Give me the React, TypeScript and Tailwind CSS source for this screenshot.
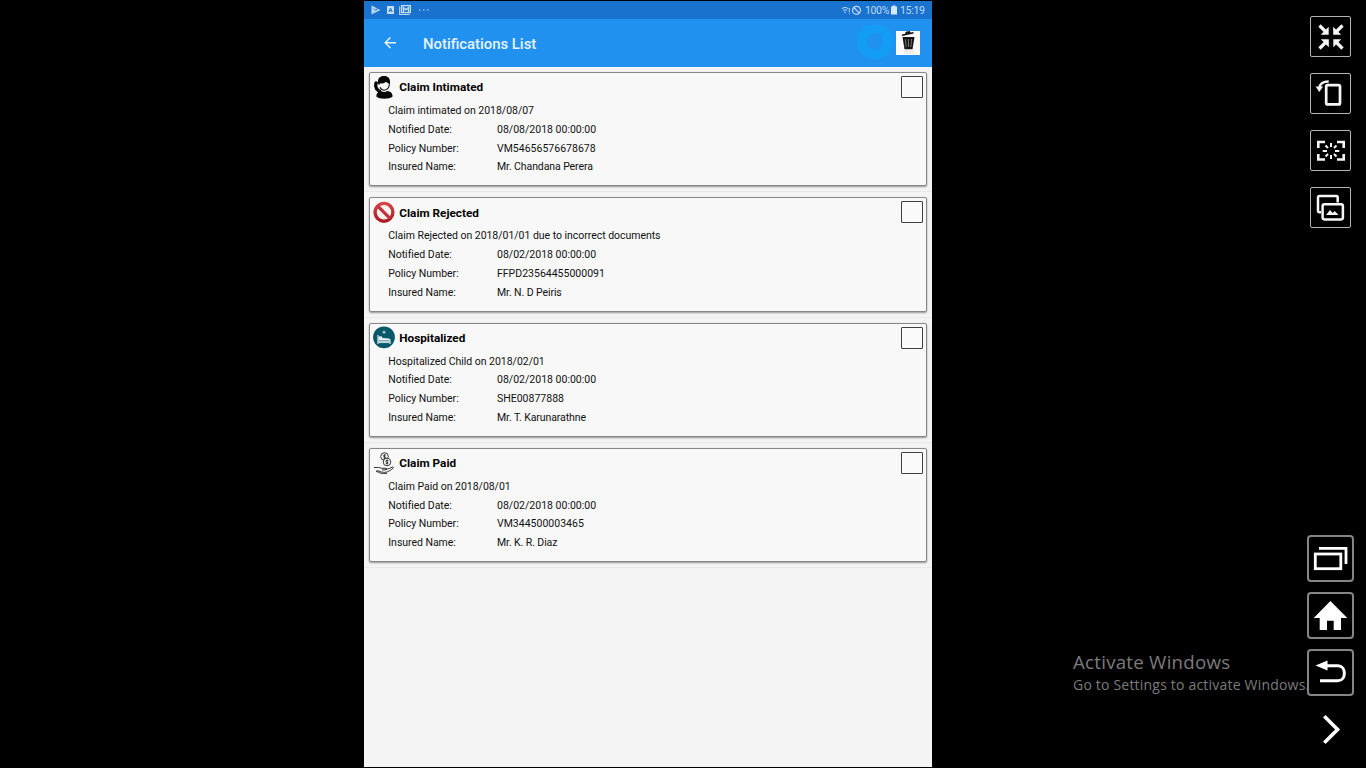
import React from "react";

type Notice = {
  title: string;
  message: string;
  date: string;
  policy: string;
  insured: string;
  icon: React.ReactNode;
};

const AgentIcon = () => (
  <svg className="h-[23px] w-[22px]" viewBox="0 0 22 23">
    <path d="M5.300 8.500C3.800 2.500 7 0 11 0S18 2.500 16.800 8.500z" fill="#050505" />
    <path d="M6.800 7.200Q11 8 13 5.800Q13.800 7.200 15.800 7.400C15.800 11.500 13.800 13.800 11.200 13.800S6.800 11.500 6.800 7.200Z" fill="#f8f8f8" />
    <path d="M2.500 5.300q2-.6 2.500 1.500l-.6 2.200q-.4 2 1.600 4l2 1.300q.6 1.200-.8 2-2.500.7-5-2.500Q.200 10 1.400 6.600z" fill="#050505" />
    <path d="M3.300 20.400c0-3 2-4.800 4.700-5.300q3.200 1.700 6.300 0c3 .5 5.300 2 5.300 5.300-3 3-13.300 3-16.300 0Z" fill="#050505" />
    <path d="M16.300 8.500q-.3 5-5 5.800-3 0-4.300-3" fill="none" stroke="#111" strokeWidth="1.100" />
  </svg>
);

const RejectedIcon = () => (
  <svg className="h-[23px] w-[22px]" viewBox="0 0 22 23">
    <defs>
      <linearGradient id="red" x1="0" y1="0" x2="0" y2="1">
        <stop offset="0" stopColor="#d4474b" />
        <stop offset="1" stopColor="#ad1b22" />
      </linearGradient>
    </defs>
    <circle cx="11" cy="11.300" r="8.900" fill="#f8f4f4" stroke="url(#red)" strokeWidth="3.400" />
    <path d="M5 5.300l12 12" stroke="#c1343a" strokeWidth="3.300" />
  </svg>
);

const HospitalIcon = () => (
  <svg className="h-[23px] w-[22px]" viewBox="0 0 22 23">
    <circle cx="11" cy="11.300" r="10.900" fill="#07596a" />
    <path d="M11 4.700v3M9.500 6.200h3" stroke="#d9e9ed" strokeWidth="1" />
    <path d="M5 9v9M17 13.500V18" stroke="#d9e9ed" strokeWidth="1.200" />
    <path d="M5.500 10.500l3-.3 1 1.800 6.500.5q1 .4 1 1.500H5.500z" fill="#e7f1f3" />
    <path d="M5 14.300h12v2.800H5z" fill="#b9d3d9" />
  </svg>
);

const PaidIcon = () => (
  <svg className="h-[23px] w-[22px]" viewBox="0 0 22 23" fill="none" stroke="#222" strokeWidth=".9">
    <circle cx="11.500" cy="4.500" r="3.800" />
    <circle cx="14" cy="10" r="3.800" fill="#f8f8f8" />
    <path d="M12.900 3.200q-2.700-.9-2.700.5 0 .8 1.400.9 1.300.2 1 1.100-.5.9-2.300.2M11.600 2v5M15.400 8.700q-2.700-.9-2.700.5 0 .8 1.400.9 1.300.2 1 1.100-.5.9-2.300.2M14.100 7.500v5" strokeWidth=".8" />
    <path d="M1 15.500q5-.5 8 .8h4q1.700.7 0 1.500l-4 .1M12.500 17.300q4-.4 7-2.300 1.500.2.700 1.200-2.700 2.300-6 3.800-2.700.8-5.700 0-2.500-1.200-5-1.300M3 19.500q2 0 4 1.500 3.500 1 7 .3" />
  </svg>
);

const notices: Notice[] = [
  { title: "Claim Intimated", message: "Claim intimated on 2018/08/07", date: "08/08/2018 00:00:00", policy: "VM54656576678678", insured: "Mr. Chandana Perera", icon: <AgentIcon /> },
  { title: "Claim Rejected", message: "Claim Rejected on 2018/01/01 due to incorrect documents", date: "08/02/2018 00:00:00", policy: "FFPD23564455000091", insured: "Mr. N. D Peiris", icon: <RejectedIcon /> },
  { title: "Hospitalized", message: "Hospitalized Child on 2018/02/01", date: "08/02/2018 00:00:00", policy: "SHE00877888", insured: "Mr. T. Karunarathne", icon: <HospitalIcon /> },
  { title: "Claim Paid", message: "Claim Paid on 2018/08/01", date: "08/02/2018 00:00:00", policy: "VM344500003465", insured: "Mr. K. R. Diaz", icon: <PaidIcon /> },
];

function Row({ label, value, tight }: { label: string; value: string; tight?: boolean }) {
  return (
    <div className="flex">
      <span className="w-[108.700px]">{label}</span>
      <span className={tight ? "tracking-[-0.090px]" : "tracking-[0.010px]"}>{value}</span>
    </div>
  );
}

function Card({ item }: { item: Notice }) {
  return (
    <div className="h-[125.330px] border-b border-[#e9e9e9] px-[5px] pt-[5px]">
      <div className="h-[114.400px] rounded-[2px] border border-[#858789] bg-[#f8f8f8] shadow-[0_1px_2px_rgba(0,0,0,0.4)]">
        <div className="flex h-[29px] items-start pl-[3px] pr-[3px] pt-[2.700px]">
          {item.icon}
          <h2 className="ml-[4.300px] mt-[2.600px] text-[11.750px] font-bold leading-[18px] text-black">{item.title}</h2>
          <span className="ml-auto mt-[0.300px] h-[22px] w-[22px] rounded-[1px] border border-[#3f3f3f] bg-[#fafafa]" />
        </div>
        <div className="pl-[18.300px] text-[10.500px] leading-[18.750px] tracking-[-0.030px] text-[#111]">
          <p>{item.message}</p>
          <Row label="Notified Date:" value={item.date} />
          <Row label="Policy Number:" value={item.policy} />
          <Row label="Insured Name:" value={item.insured} tight />
        </div>
      </div>
    </div>
  );
}

function StatusBar() {
  return (
    <div className="flex h-[18px] items-center bg-[#1a72cf] pl-[7px] pr-[7px] text-[10.500px] text-[#bfd9f4]">
      <svg className="h-[18px] w-[64px]" viewBox="0 0 64 18">
        <path d="M.5 4.500l9 4.500-9 4.500z" fill="#b9d6f3" />
        <path d="M2.800 7.500l1.900 1.900 4-4.200" fill="none" stroke="#1a72cf" strokeWidth="1" />
        <rect x="16" y="5" width="7" height="8" rx=".5" fill="#c9dff5" />
        <path d="M17.800 11l1.700-4 1.700 4M18.500 9.700h2" fill="none" stroke="#1a72cf" strokeWidth="1" />
        <path d="M28.700 5.500v8h10" fill="none" stroke="#b9d6f3" strokeWidth="1.200" />
        <rect x="30.600" y="4.600" width="8.800" height="7" fill="none" stroke="#c9dff5" strokeWidth="1.200" />
        <path d="M32.500 11V6.500l2.500 2.200 2.500-2.200V11" fill="none" stroke="#c9dff5" strokeWidth="1.400" />
        <path d="M48 9h1.500M52 9h1.500M56 9h1.500" stroke="#8fbdeb" strokeWidth="1.300" />
      </svg>
      <svg className="ml-auto h-[18px] w-[22px]" viewBox="0 0 22 18" fill="none" stroke="#bfd9f4">
        <path d="M.8 7.500q3.200-2.300 6.500 0M2 9.500q2-1.500 4 0M3.200 11.500q.9-.8 1.700 0" strokeWidth="1" />
        <path d="M8.300 7v4M8.300 11.700v1" strokeWidth=".9" />
        <circle cx="15.500" cy="9.300" r="4" strokeWidth="1.200" />
        <path d="M12.700 6.500l5.600 5.600" strokeWidth="1.200" />
      </svg>
      <span className="ml-[2.500px] w-[24px] whitespace-nowrap pt-px tracking-[-0.350px]">100%</span>
      <svg className="ml-[2px] h-[18px] w-[6px]" viewBox="0 0 6 18">
        <path d="M1.500 4.500h3v1H6v8H0v-8h1.500z" fill="#d6e7f8" />
      </svg>
      <span className="ml-[3px] w-[25px] whitespace-nowrap pt-px tracking-[-0.300px]">15:19</span>
    </div>
  );
}

function AppBar() {
  return (
    <div className="flex h-[48px] items-center bg-[#2191f0]">
      <svg className="ml-[20px] h-[14px] w-[14px]" viewBox="0 0 14 14" fill="none" stroke="#eef7ff" strokeWidth="1.400">
        <path d="M12 6.700H1.200M6.400 1.500L1.200 6.700l5.200 5.200" />
      </svg>
      <h1 className="ml-[25px] mt-[2px] text-[14.850px] font-medium leading-[20px] text-[#e6f3ff]">Notifications List</h1>
      <svg className="ml-auto h-[36px] w-[36px]" viewBox="0 0 36 36">
        <circle cx="18" cy="16.500" r="13.200" fill="none" stroke="#149df5" strokeWidth="9.800" />
      </svg>
      <svg className="ml-[3.300px] mr-[12px] h-[24px] w-[24px]" viewBox="0 0 24 24">
        <rect width="24" height="24" fill="#fafafa" />
        <rect x="8" y="19" width="10" height="4" fill="#ededed" />
        <path d="M6 4.200l11.500-2.500M10 3.200l.3-1.700 3-.6.8 1.400" fill="none" stroke="#111" strokeWidth="1.500" />
        <path d="M6.500 6h12l-2 12.300h-8z" fill="#151515" />
        <path d="M9.400 8l.8 8M12.500 8v8M15.600 8l-.8 8" stroke="#999" strokeWidth=".7" />
      </svg>
    </div>
  );
}

function SmallButton({ children }: { children: React.ReactNode }) {
  return (
    <button className="h-[41px] w-[41px] rounded-[2px] border border-[#b4b4b4] bg-black">
      <svg className="-ml-px -mt-px h-[42px] w-[42px] max-w-none" viewBox="0 0 42 42" fill="none" stroke="#f6f6f6">{children}</svg>
    </button>
  );
}

function LargeButton({ children, plain }: { children: React.ReactNode; plain?: boolean }) {
  return (
    <button className={plain ? "h-[47px] w-[47px] border-2 border-transparent" : "h-[47px] w-[47px] rounded-[4px] border-2 border-[#858585] bg-black"}>
      <svg className="-ml-[2px] -mt-[2px] h-[47px] w-[47px] max-w-none" viewBox="0 0 47 47" fill="none" stroke="#fff">{children}</svg>
    </button>
  );
}

function Sidebar() {
  return (
    <aside className="flex w-[60px] flex-col items-start pt-[16px]">
      <div className="ml-[4px] flex flex-col gap-[16px]">
        <SmallButton>
          {[0, 90, 180, 270].map((a) => (
            <g key={a} transform={`rotate(${a} 21 21)`}>
              <path d="M9.500 9.500l6.500 6.500" strokeWidth="3.200" />
              <path d="M18.700 10.800v8h-8z" fill="#f6f6f6" stroke="none" />
            </g>
          ))}
        </SmallButton>
        <SmallButton>
          <rect x="16.200" y="12.200" width="13.800" height="19.200" rx="1.500" strokeWidth="2.700" />
          <path d="M9.500 15q.5-6.500 9.200-6.500" strokeWidth="2.300" />
          <path d="M5.700 13.600h7.500l-4 5.300z" fill="#f6f6f6" stroke="none" />
        </SmallButton>
        <SmallButton>
          <path d="M8.300 18v-6h6.700M27 12h6.700v6M8.300 24v5.500h6.700M27 29.500h6.700V24" strokeWidth="2.600" />
          <path d="M21 13v4M21 25v4M12.700 21H17M25 21h4.300M15.500 15.500l2.500 2.500M26.500 15.500L24 18M15.500 26.500l2.500-2.500M26.500 26.500L24 24" strokeWidth="2" />
        </SmallButton>
        <SmallButton>
          <path d="M11 25.200H9.500q-1.500 0-1.500-1.500V10.500q0-1.500 1.500-1.500h16.700q1.500 0 1.500 1.500v5" strokeWidth="2.500" />
          <rect x="12.600" y="17.200" width="20.300" height="15.200" rx="1.800" strokeWidth="2.500" />
          <path d="M16 28l4-5 2.700 3 2-2 3.900 4z" fill="#f6f6f6" stroke="none" />
        </SmallButton>
      </div>
      <div className="ml-px mt-[307px] flex flex-col gap-[10px]">
        <LargeButton>
          <rect x="8.300" y="19" width="25.500" height="14.700" strokeWidth="2.800" />
          <path d="M12 13.300h27V29" strokeWidth="2.800" />
        </LargeButton>
        <LargeButton>
          <path d="M23.400 9L40.300 26H34v12h-7.300v-9.300H20V38h-7.300V26H6.700z" fill="#fff" stroke="none" />
        </LargeButton>
        <LargeButton>
          <path d="M19 16.700h12c8.500 0 8.500 15 0 15H13" strokeWidth="3" />
          <path d="M8.500 16.500l12-5v10z" fill="#fff" stroke="none" />
        </LargeButton>
        <LargeButton plain>
          <path d="M17.300 10.300l13.300 13.200-13.300 13.300" strokeWidth="3.600" />
        </LargeButton>
      </div>
    </aside>
  );
}

export default function App() {
  return (
    <div className="flex h-[768px] w-[1366px] overflow-hidden bg-black font-['Roboto',sans-serif]">
      <main className="ml-[364px] mt-px h-[766px] w-[568px] bg-[#f4f4f4]">
        <StatusBar />
        <AppBar />
        <section>
          {notices.map((n) => (
            <Card key={n.title} item={n} />
          ))}
        </section>
      </main>
      <div className="ml-[141px] w-[233px] whitespace-nowrap pt-[650px] font-['Open_Sans',sans-serif] text-[#7b7b7b]">
        <p className="text-[18.700px] leading-[24px] tracking-[0.250px]">Activate Windows</p>
        <p className="text-[14px] leading-[21px] tracking-[0.200px]">Go to Settings to activate Windows.</p>
      </div>
      <Sidebar />
    </div>
  );
}
